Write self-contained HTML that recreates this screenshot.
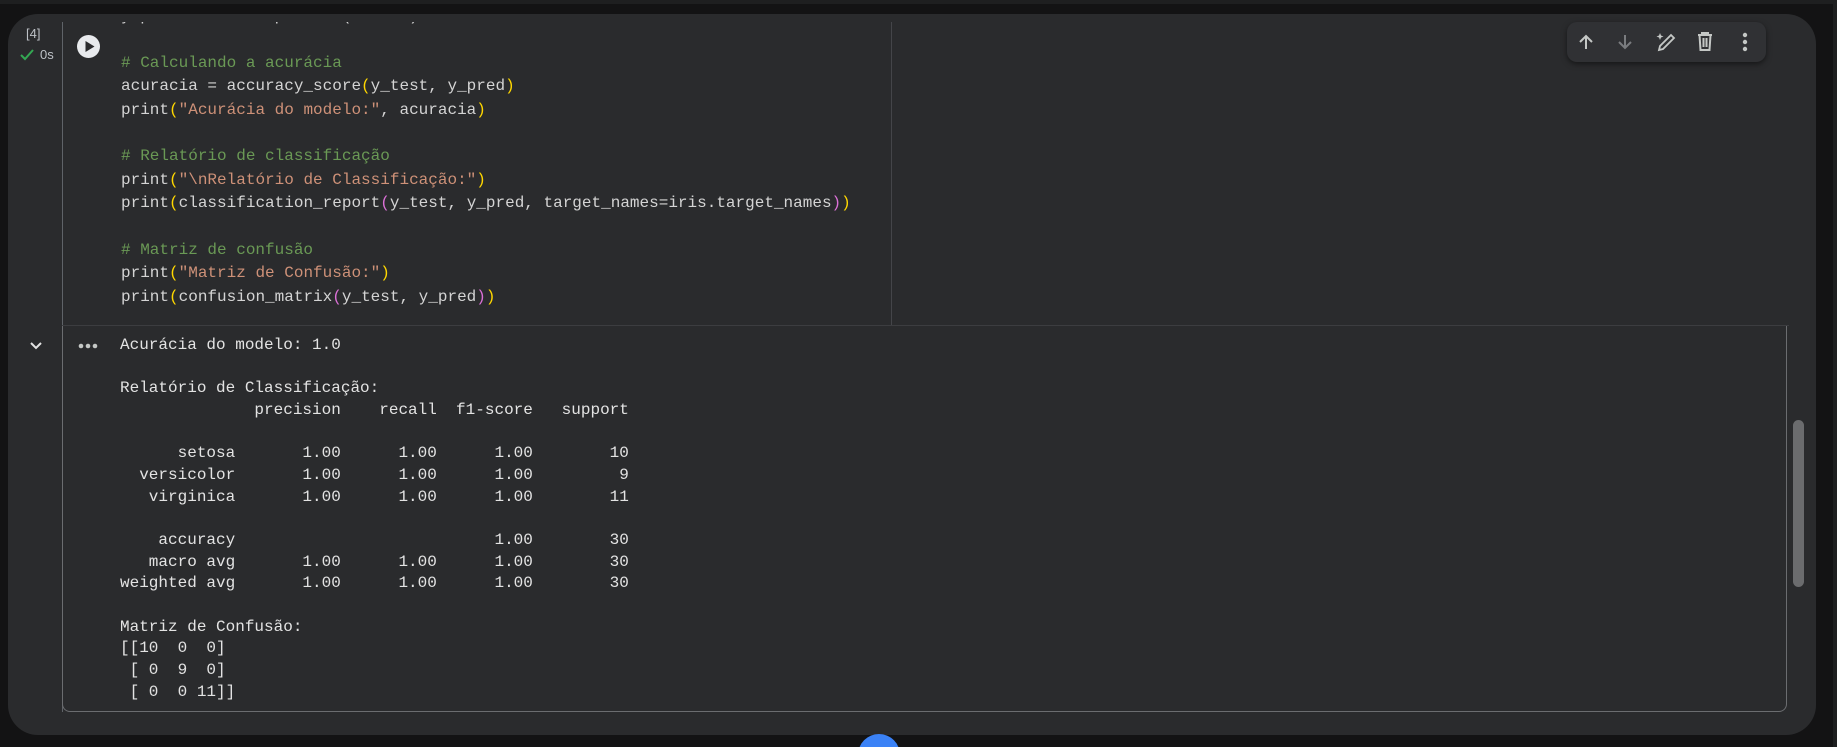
<!DOCTYPE html>
<html><head><meta charset="utf-8"><style>
*{margin:0;padding:0;box-sizing:border-box}
html,body{width:1837px;height:747px;overflow:hidden}
body{background:#131314;font-family:"Liberation Mono",monospace}
#w{position:relative;width:1837px;height:747px;overflow:hidden}
.top{position:absolute;left:0;top:0;width:1837px;height:4px;background:#1e1f20}
.rs{position:absolute;right:0;top:0;width:4px;height:747px;background:#1e1f20}
.card{position:absolute;left:8px;top:14px;width:1808px;height:721px;background:#2a2b2d;border-radius:30px}
.abs{position:absolute}
.code{position:absolute;left:121px;top:22px;width:760px;height:303px;overflow:hidden}
.code pre{position:absolute;left:0;top:-17px;font-family:"Liberation Mono",monospace;font-size:16px;line-height:23.4px;color:#d4d4d4}
.c{color:#6a9955}.s{color:#ce9178}.y{color:#ffd700}.p{color:#da70d6}
.out pre{font-family:"Liberation Mono",monospace;font-size:16px;line-height:21.67px;color:#e3e3e3}
</style></head><body><div id="w">
<div class="top"></div><div class="rs"></div>
<div class="card"></div>
<div class="abs" style="left:62px;top:22px;width:1px;height:690px;background:#5f6368"></div>
<div class="abs" style="left:62px;top:325px;width:1727px;height:1px;background:#3c3d40"></div>
<div class="abs" style="left:891px;top:22px;width:1px;height:303px;background:#444549"></div>
<div class="abs" style="left:62px;top:326px;width:1725px;height:386px;border:1px solid #6b6d70;border-top:none;border-radius:0 0 8px 8px"></div>
<div class="abs" style="left:26px;top:26px;font:13px 'Liberation Sans',sans-serif;color:#bdc1c6">[4]</div>
<svg class="abs" style="left:19px;top:48px" width="16" height="14" viewBox="0 0 16 14"><path d="M2 7l4 4 8-9" fill="none" stroke="#34a853" stroke-width="2"/></svg>
<div class="abs" style="left:40px;top:47px;font:13px 'Liberation Sans',sans-serif;color:#bdc1c6">0s</div>
<svg class="abs" style="left:77px;top:35px" width="23" height="23" viewBox="0 0 23 23"><circle cx="11.5" cy="11.5" r="11.5" fill="#e8eaed"/><path d="M8.5 6v11l9-5.5z" fill="#2a2b2d"/></svg>
<div class="code"><pre>y_pred = modelo.predict(X_test)

<span class="c"># Calculando a acurácia</span>
acuracia = accuracy_score<span class="y">(</span>y_test, y_pred<span class="y">)</span>
print<span class="y">(</span><span class="s">"Acurácia do modelo:"</span>, acuracia<span class="y">)</span>

<span class="c"># Relatório de classificação</span>
print<span class="y">(</span><span class="s">"\nRelatório de Classificação:"</span><span class="y">)</span>
print<span class="y">(</span>classification_report<span class="p">(</span>y_test, y_pred, target_names=iris.target_names<span class="p">)</span><span class="y">)</span>

<span class="c"># Matriz de confusão</span>
print<span class="y">(</span><span class="s">"Matriz de Confusão:"</span><span class="y">)</span>
print<span class="y">(</span>confusion_matrix<span class="p">(</span>y_test, y_pred<span class="p">)</span><span class="y">)</span></pre></div>
<div class="abs" style="left:1567px;top:22px;width:199px;height:40px;background:#303134;border-radius:10px;box-shadow:0 2px 6px rgba(0,0,0,.5)"></div>
<svg class="abs" style="left:1576px;top:32px" width="20" height="20" viewBox="0 0 20 20"><path d="M10 17V4M4 10l6-6 6 6" fill="none" stroke="#c4c7c5" stroke-width="2"/></svg>
<svg class="abs" style="left:1615px;top:32px" width="20" height="20" viewBox="0 0 20 20"><path d="M10 3v13M4 10l6 6 6-6" fill="none" stroke="#7a7c7f" stroke-width="2"/></svg>
<svg class="abs" style="left:1654px;top:30px" width="24" height="24" viewBox="0 0 24 24"><path d="M6 3l1 2.5 2.5 1-2.5 1L6 10 5 7.5 2.5 6.5 5 5.5z" fill="#c4c7c5"/><path d="M5 20l1-4L17 5l3 3L9 19z" fill="none" stroke="#c4c7c5" stroke-width="1.8"/></svg>
<svg class="abs" style="left:1695px;top:31px" width="20" height="22" viewBox="0 0 20 22"><path d="M3 4h14M7 4V2h6v2M4.5 4l1 15h9l1-15M8.5 7v9M11.5 7v9" fill="none" stroke="#c4c7c5" stroke-width="2"/></svg>
<svg class="abs" style="left:1740px;top:31px" width="10" height="22" viewBox="0 0 10 22"><circle cx="5" cy="4" r="2.2" fill="#c4c7c5"/><circle cx="5" cy="11" r="2.2" fill="#c4c7c5"/><circle cx="5" cy="18" r="2.2" fill="#c4c7c5"/></svg>
<svg class="abs" style="left:28px;top:340px" width="16" height="12" viewBox="0 0 16 12"><path d="M3 3l5 5 5-5" fill="none" stroke="#e3e3e3" stroke-width="2"/></svg>
<svg class="abs" style="left:78px;top:343px" width="20" height="6" viewBox="0 0 20 6"><circle cx="3" cy="3" r="2.3" fill="#c4c7c5"/><circle cx="10" cy="3" r="2.3" fill="#c4c7c5"/><circle cx="17" cy="3" r="2.3" fill="#c4c7c5"/></svg>
<div class="abs out" style="left:120px;top:335px"><pre>Acurácia do modelo: 1.0

Relatório de Classificação:
              precision    recall  f1-score   support

      setosa       1.00      1.00      1.00        10
  versicolor       1.00      1.00      1.00         9
   virginica       1.00      1.00      1.00        11

    accuracy                           1.00        30
   macro avg       1.00      1.00      1.00        30
weighted avg       1.00      1.00      1.00        30

Matriz de Confusão:
[[10  0  0]
 [ 0  9  0]
 [ 0  0 11]]</pre></div>
<div class="abs" style="left:1793px;top:420px;width:11px;height:167px;background:#6b6c6e;border-radius:6px"></div>
<div class="abs" style="left:858px;top:734px;width:42px;height:42px;border-radius:50%;background:#3b82f6"></div>
</div></body></html>
